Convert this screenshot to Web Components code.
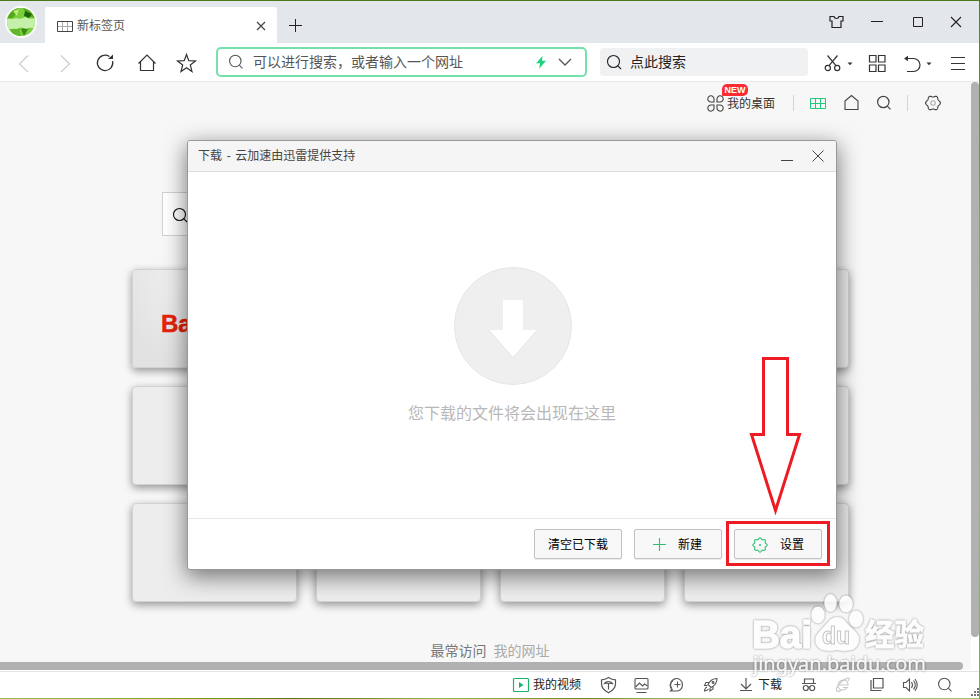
<!DOCTYPE html>
<html lang="zh-CN">
<head>
<meta charset="utf-8">
<title>新标签页</title>
<style>
html,body{margin:0;height:100%;overflow:hidden}
body{font:12px/16px "Liberation Sans","Noto Sans CJK SC",sans-serif;color:#333}
</style>
</head>
<body>
<browser-window></browser-window>
<script>
/* Closed outline whose radius swells once per lobe. */
const lobed=(lobes,radius,swell)=>{
  const pts=[];
  for(let i=0;i<96;i++){
    const a=i*Math.PI/48,r=radius+swell*Math.cos(lobes*a);
    pts.push((12+r*Math.cos(a)).toFixed(2)+' '+(12+r*Math.sin(a)).toFixed(2));
  }
  return `<path d="M${pts.join('L')}z"/>`;
};
const ICONS = {
  back:'<path d="M16 5.5 7.5 14 16 22"/>',
  forward:'<path d="M8 5.5 16.500 14 8 22"/>',
  reload:'<path d="M19.600 11.200a7.700 7.700 0 1 1-3.200-4.700"/><path d="M15 9h5V4.500z" fill="currentColor" stroke="none"/>',
  home:'<path d="M3.500 13.500 12 5l8.500 8.500M5.500 12v8.500h13V12"/>',
  star:'<path d="m12.500 4.500 2.300 6.200 6.700.3-5.200 4 1.700 6.500-5.500-3.700L7 21.500 8.700 15l-5.200-4 6.700-.3z"/>',
  search:'<circle cx="11.300" cy="11" r="5.700"/><path d="m15.500 15.300 3 3"/>',
  bigsearch:'<circle cx="11.500" cy="11.500" r="6"/><path d="m15.700 15.700 3.300 3.300"/>',
  bolt:'<path d="M13.500 6 7 13.200h4l-.8 5.500 6.800-8h-4z" fill="#1fd47c" stroke="none"/>',
  chevron:'<path d="m6 9 6 6 6-6"/>',
  scissors:'<circle cx="6.800" cy="18" r="2.600"/><circle cx="16.200" cy="18" r="2.600"/><path d="M6.500 5.500 15 15.700M16.500 5.500 8 15.700"/>',
  caret:'<path d="M9.500 12.500h5L12 15.300z" fill="currentColor" stroke="none"/>',
  grid4:'<path d="M4.500 5.500h6.500v6.500H4.500zM13.500 5.500H20v6.500h-6.500zM4.500 15h6.500v6.500H4.500zM13.500 15H20v6.500h-6.500z"/>',
  undo:'<path d="M6 8.500h7.500a6.500 6.500 0 0 1 0 13H7"/><path d="m4 8.500 4-2.700v5.400z" fill="currentColor" stroke="none"/>',
  menu:'<path d="M4 7.500h14M4 13.500h14M4 19.500h14"/>',
  table:'<path d="M4.500 7.500h15v10h-15zM9.500 7.500v10M14.500 7.500v10M4.500 12.500h15"/>',
  tabtable:'<path d="M9.500 7.500v10M14.500 7.500v10M4.500 12.500h15" stroke="#aaa"/><path d="M4.500 7.500h15v10h-15z"/>',
  close:'<path d="m8 8 8 8m0-8-8 8"/>',
  wclose:'<path d="m7 7 10 10M17 7 7 17"/>',
  bigclose:'<path d="m6.500 6.500 11 11m0-11-11 11"/>',
  plus:'<path d="M12.500 6v13M6 12.500h13"/>',
  shirt:'<path d="M6 6.500h4q.5 2 2.500 2t2.500-2h4v4.500h-2v6.500H8v-6.500H6z"/>',
  minus:'<path d="M6 11.500h12"/>',
  dminus:'<path d="M6 17.500h12"/>',
  square:'<path d="M7.500 7.500h9v9h-9z"/>',
  clover:'<path d="M11 11H8A3.100 3.100 0 1 1 11 8zM14 11V8a3.100 3.100 0 1 1 3 3zM11 14v3A3.100 3.100 0 1 1 8 14zM14 14h3a3.100 3.100 0 1 1-3 3z"/>',
  house:'<path d="M6 10 12.500 4.500 19 10v8.500H6z"/>',
  hexgear:lobed(6,6.7,.7)+'<circle cx="12" cy="12" r="2.200" stroke="#aaa"/>',
  gear:lobed(8,6.4,.75)+'<circle cx="12" cy="12" r="1" fill="currentColor" stroke="none"/>',
  video:'<rect x="4.500" y="5.500" width="15" height="13" rx="1"/><path d="M10 9v6l4.500-3z" fill="currentColor" stroke="none"/>',
  shield:'<path d="M12.500 4.500q3.500 2.300 7 2.300v4q0 5.500-7 9-7-3.500-7-9v-4q3.500 0 7-2.300z"/><path d="M8.500 10.500q1-2 4-2t4.500 2.500q-2.500-1.500-4.500-.5-2-.8-4 0zM12.500 10v6.500"/>',
  picture:'<rect x="6" y="5.500" width="13" height="10.500" rx="1"/><path d="m6.500 14 4-4 3 3 2-2 3 2M7.500 19.500h10"/>',
  speed:'<path d="M8 15.500a6 6 0 1 1 10.500-3.500c0 3.500-3 6-6 6H6.500l2-2M13.500 8.500v6M10.500 11.500h6"/><path d="M9 7.500Q4 11 8 17.500"/>',
  rocket:'<path d="M19 5.500q-6 0-9 6l3 3q6-3 6-9zM11 9.500H8l-1.500 3h3M15 13.500V16l-3 2v-3M9 14q-2 .5-2.500 4 3-.3 4-2"/><circle cx="15" cy="9.500" r=".9"/>',
  download:'<path d="M12 5v11M7 11l5 5 5-5M6 17.500h12"/>',
  incognito:'<path d="M7.500 10V6h9v4M5 10.500h14"/><circle cx="8.800" cy="15" r="2.500"/><circle cx="15.200" cy="15" r="2.500"/><path d="M11 14h2"/>',
  ie:'<path d="M8 12h9q0-5-4.500-5Q7 7.500 7 13q.5 4 4.500 4 3 0 5-2.500H12M17 8q2.500-3 0-3-5 1-11 9-1.800 4 1 4.500 1.500 0 3-1.200"/>',
  windows:'<path d="M8.500 5.500h9.500v9.500H8.500zM6 7v10.500h10.500"/>',
  volume:'<path d="M5.500 9.500h2.500l3.500-3.500v12L8 14.500H5.500zM13.500 9q2 3 0 6M15.500 7.500q3.500 4.500 0 9M17 6q4.500 6 0 12"/>'
};
const define=(name,html,init)=>customElements.define(name,class extends HTMLElement{
  connectedCallback(){
    if(this.shadowRoot)return;
    const root=this.attachShadow({mode:'open'});
    const t=document.createElement('template');t.innerHTML=html;
    root.append(t.content.cloneNode(true));
    if(init)init(this,root);
  }
});

define('ui-icon',`<style>:host{display:block;flex:none;width:24px;height:24px}svg{display:block}</style><div></div>`,(el,root)=>{
  root.querySelector('div').innerHTML=`<svg width="24" height="24" viewBox="0 0 24 24" fill="none" stroke="currentColor" stroke-width="${el.getAttribute('weight')||1.1}">${ICONS[el.getAttribute('name')]}</svg>`;
  if(el.hasAttribute('gap'))el.style.marginLeft=el.getAttribute('gap')+'px';
});

define('tab-strip',`<style>
:host{display:flex;height:42px;align-items:flex-start;background:#e3e6eb;color:#222}
.avatar{margin:5px 0 0 5px;width:28px;height:28px;border:2px solid #fbfdf8;border-radius:50%;flex:none;overflow:hidden}
.tab{display:flex;align-items:center;box-sizing:border-box;width:232px;height:36px;margin:6px 0 0 8px;background:#fff;border-radius:2px 2px 0 0;padding:2px 0 0 8px;color:#444}
.tab span{width:52px;color:#555}
.ctl{margin-top:9px}.add{margin-top:12px}
</style>
<div class="avatar"><svg width="28" height="28" viewBox="0 0 28 28"><rect width="28" height="28" fill="#7bcf3c"/><path d="M0 0h12L7 9 0 12zM16 0h12v10l-8-2z" fill="#55a81c"/><path d="m18 3 7 3-3 4-5-2z" fill="#1d6509"/><path d="m6 3 6-2-2 7z" fill="#b8ee72"/><path d="m3 20 9-1 2 9H6z" fill="#61b62b"/><path d="m14 21 8-2-5 9z" fill="#398915"/><path d="M0 10q6 2 9 0 5 2 9-1 5 3 10 1v10q-5-1-9 1-5-3-9 0-5-1-10 1z" fill="#c5f0aa"/></svg></div>
<div class="tab"><ui-icon name="tabtable" weight="1"></ui-icon><span>新标签页</span><ui-icon name="close" gap="120" weight="1.200"></ui-icon></div>
<ui-icon class="add" name="plus" gap="6" weight="1"></ui-icon>
<ui-icon class="ctl" name="shirt" gap="517" weight="1.200"></ui-icon>
<ui-icon class="ctl" name="minus" gap="17" weight="1"></ui-icon>
<ui-icon class="ctl" name="square" gap="17" weight="1"></ui-icon>
<ui-icon class="ctl" name="wclose" gap="14"></ui-icon>`);

define('search-field',`<style>
:host{display:flex;align-items:center;box-sizing:border-box;flex:none;font-size:14px;line-height:20px;color:#555}
span{white-space:nowrap;margin-left:var(--label-gap,5px)}
</style><ui-icon name="search"></ui-icon><span><slot></slot></span><slot name="end"></slot>`,(el,root)=>{
  if(el.hasAttribute('big'))root.querySelector('ui-icon').shadowRoot.querySelector('svg').innerHTML=ICONS.bigsearch;
});

define('tool-bar',`<style>
:host{display:flex;height:38px;align-items:center;background:#fff;border-bottom:1px solid #e9e9e9;color:#333}
.off{color:#ccc}
.addr{width:371px;height:30px;margin-left:18px;border:2px solid #75e0ab;border-radius:5px;padding-left:6px}
.addr .end{display:flex;margin-left:66px}
.find{width:208px;height:28px;margin-left:13px;border-radius:4px;background:#eff1f3;padding-left:2px;color:#222;--label-gap:4px}
.caret{width:12px;display:flex;justify-content:center}
</style>
<ui-icon class="off" name="back" gap="12"></ui-icon><ui-icon class="off" name="forward" gap="17"></ui-icon>
<ui-icon name="reload" gap="16" weight="1.300"></ui-icon><ui-icon name="home" gap="18" weight="1.200"></ui-icon><ui-icon name="star" gap="15" weight="1.200"></ui-icon>
<search-field class="addr">可以进行搜索，或者输入一个网址<div class="end" slot="end"><ui-icon name="bolt"></ui-icon><ui-icon name="chevron" weight="1.300"></ui-icon></div></search-field>
<search-field class="find" big>点此搜索</search-field>
<ui-icon name="scissors" gap="13" weight="1.200"></ui-icon><div class="caret" style="margin-left:-1px"><ui-icon name="caret"></ui-icon></div>
<ui-icon name="grid4" gap="9" weight="1.200"></ui-icon><ui-icon name="undo" gap="11" weight="1.200"></ui-icon><div class="caret" style="margin-left:-1px"><ui-icon name="caret"></ui-icon></div>
<ui-icon name="menu" gap="12" weight="1"></ui-icon>`);

define('quick-links',`<style>
:host{display:flex;align-items:center;justify-content:flex-end;height:42px;padding-right:35px;color:#444}
.desk{position:relative;color:#333;padding-top:1px}
.new{position:absolute;left:-5px;top:-11px;width:26px;height:12px;border-radius:5px 5px 5px 1px;background:#fb2d32;color:#fff;font:bold 9px/12px "Liberation Sans",sans-serif;text-align:center}
i{width:1px;height:16px;background:#d5d5d5;margin-left:18px}
</style>
<ui-icon name="clover"></ui-icon><div class="desk">我的桌面<b class="new">NEW</b></div><i></i>
<ui-icon name="table" gap="12" weight="1" style="color:#22c978"></ui-icon><ui-icon name="house" gap="9"></ui-icon><ui-icon name="search" gap="9" weight="1.200"></ui-icon><i style="margin-left:11px"></i><ui-icon name="hexgear" gap="13"></ui-icon>`);

define('site-card',`<style>
:host{display:flex;align-items:center;box-sizing:border-box;width:165px;height:99px;border:1px solid #d2d2d2;border-radius:4px;background:#ededed;box-shadow:0 3px 8px rgba(0,0,0,.4);overflow:hidden;color:#e62208;font:bold 24px/28px "Liberation Sans",sans-serif;padding:11px 0 0 28px}
:host([logo]){background:radial-gradient(circle at 50% 0,#f5f5f5,#e2e2e2 80%);-webkit-text-stroke:.5px #e62208}
</style><slot></slot>`);

define('new-tab-page',`<style>
:host{display:block;height:588px;width:980px;background:#f7f7f7}
.search{width:657px;height:44px;margin:68px 0 0 162px;border:1px solid #d2d2d2;background:#fff;color:#111;padding:1px 0 0 5px}
.cards{display:grid;grid-template-columns:repeat(4,165px);gap:18px 19px;margin:33px 0 0 132px}
footer{display:flex;gap:7px;justify-content:center;margin-top:39px;font-size:14px;line-height:20px;color:#aaa}
footer b{font-weight:400;color:#777}
</style>
<quick-links></quick-links>
<search-field class="search" big></search-field>
<div class="cards"><site-card logo>Ba</site-card>${'<site-card></site-card>'.repeat(11)}</div>
<footer><b>最常访问</b><span>我的网址</span></footer>`);

define('status-bar',`<style>
:host{display:flex;height:27px;align-items:center;background:#fff;border-top:1px solid #e4e4e4;color:#555;box-sizing:border-box;padding-bottom:1px}
span{color:#222;white-space:nowrap}
svg{align-self:flex-end;margin-left:14px}
</style>
<ui-icon name="video" gap="509" style="color:#18b566" weight="1.200"></ui-icon><span>我的视频</span>
<ui-icon name="shield" gap="15" weight="1.200"></ui-icon><ui-icon name="picture" gap="9"></ui-icon><ui-icon name="speed" gap="11"></ui-icon><ui-icon name="rocket" gap="10"></ui-icon>
<ui-icon name="download" gap="12" weight="1.200"></ui-icon><span>下载</span><ui-icon name="incognito" gap="15" weight="1.200"></ui-icon><ui-icon name="ie" gap="10" style="color:#c8c8c8"></ui-icon><ui-icon name="windows" gap="10" weight="1.200"></ui-icon><ui-icon name="volume" gap="9"></ui-icon><ui-icon name="search" gap="11"></ui-icon>
<svg width="9" height="9" fill="#777"><path d="M6 0h2v2H6zM3 3h2v2H3zM6 3h2v2H6zM0 6h2v2H0zM3 6h2v2H3zM6 6h2v2H6z"/></svg>`);

define('dialog-button',`<style>
:host{display:flex;align-items:center;justify-content:center;box-sizing:border-box;width:88px;height:30px;border:1px solid #c2c2c2;border-radius:2px;background:#f8f8f8;color:#000;box-shadow:0 1px 1px rgba(0,0,0,.08);padding-top:1px}
:host([icon]){justify-content:flex-start}
:host([icon=plus]){padding-left:12px}
:host([icon=gear]){padding-left:13px}
ui-icon{color:#2fbf6f;margin-right:8px}
:host([icon=plus]) ui-icon{margin:-1px 7px 0 0}
</style><slot></slot>`,(el,root)=>{
  if(el.hasAttribute('icon')){const i=document.createElement('ui-icon');i.setAttribute('name',el.getAttribute('icon'));i.setAttribute('weight','1.100');root.insertBefore(i,root.querySelector('slot'));}
});

define('download-dialog',`<style>
:host{display:flex;flex-direction:column;box-sizing:border-box;width:650px;height:430px;background:#fff;border:1px solid #999;border-radius:3px;box-shadow:0 6px 22px 1px rgba(0,0,0,.5);color:#333}
header{display:flex;align-items:center;height:30px;flex:none;background:#f5f5f5;border-bottom:1px solid #dcdcdc;border-radius:2px 2px 0 0;padding-left:10px;color:#444}
header span{flex:1;padding-bottom:1px;word-spacing:1.300px}
main{flex:1;display:flex;flex-direction:column;align-items:center;padding-top:95px;font-size:16px;line-height:24px;color:#b8b8b8}
main svg{margin-left:2px}
main p{margin:17px 0 0}
footer{display:flex;gap:12px;justify-content:flex-end;height:51px;box-sizing:border-box;border-top:1px solid #e7e7e7;padding:10px 14px 0 0;flex:none}
</style>
<header><span>下载 - 云加速由迅雷提供支持</span><ui-icon name="dminus" weight="1" style="margin-top:-2px"></ui-icon><ui-icon name="bigclose" gap="7" weight="1" style="margin-right:6px"></ui-icon></header>
<main><svg width="118" height="118"><circle cx="59" cy="59" r="58.500" fill="#efefef" stroke="#e6e6e6"/><path d="M49 33h20v30h14L59 90.500 35 63h14z" fill="#fff"/><path d="M35 63.500 59 90.500l24-27" fill="none" stroke="#e0e0e0" stroke-width=".7"/></svg><p>您下载的文件将会出现在这里</p></main>
<footer><dialog-button>清空已下载</dialog-button><dialog-button icon="plus">新建</dialog-button><dialog-button icon="gear">设置</dialog-button></footer>`);

define('red-callout',`<style>:host{display:block}svg{display:block}</style>
<svg width="104" height="210" fill="none" stroke="#ed1c24" stroke-width="3"><path d="M37.500 2.500h24v76H73.500L49.500 154.500 25.500 78.500H37.500z"/><path d="M1.500 166.500h101v42H1.500z"/></svg>`);

define('paw-watermark',`<style>:host{display:block;opacity:.85}svg{display:block;overflow:visible;filter:drop-shadow(0 0 1px rgba(0,0,0,.5))}text{font-family:"Liberation Sans","Noto Sans CJK SC",sans-serif;font-weight:700}</style>
<svg width="180" height="90" fill="#fff">
<g stroke="#fff" stroke-width="1.400"><text x="2" y="57.500" font-size="38" textLength="60" lengthAdjust="spacingAndGlyphs">Bai</text>
<text x="115" y="55" font-size="30" textLength="59" lengthAdjust="spacingAndGlyphs" stroke-width=".8">经验</text></g>
<ellipse cx="68" cy="25" rx="6.800" ry="8.500"/><ellipse cx="80.500" cy="13" rx="6.300" ry="9"/><ellipse cx="96" cy="14" rx="6.800" ry="8.500"/><ellipse cx="106" cy="29" rx="7" ry="8.500"/>
<path d="M87 27q6 0 9 5l10 10q6 7 1 14-4 7-20 4-15 3-20-4-4-7 1-13l10-11q4-5 9-5z"/>
<text x="72" y="54" font-size="24" textLength="28" lengthAdjust="spacingAndGlyphs" stroke="#bcbcbc" stroke-width="1">du</text>
<text x="3" y="81" font-size="20" textLength="173" lengthAdjust="spacingAndGlyphs" style="font-weight:400;font-family:'Noto Sans',sans-serif" stroke="#fff" stroke-width=".3">jingyan.baidu.com</text>
</svg>`);

define('browser-window',`<style>
:host{display:block;position:relative;box-sizing:border-box;width:980px;height:699px;overflow:hidden;background:#fff;border-top:1px solid #4c7a1b}
.page{height:589px;overflow:hidden}
.layer{position:absolute}
.v{left:971px;top:81px;width:8px;height:555px;border-radius:4px;background:#b1b1b1}
.h{left:0;top:661px;width:963px;height:8px;border-radius:0 4px 4px 0;background:#b1b1b1}
.gutter{left:971px;top:81px;width:9px;height:588px;background:#fff}
.edge{left:979px;top:0;width:1px;height:698px;background:linear-gradient(#55792f,#7fa35b 30%,#96b478 70%,#7cae3f)}
.ground{height:2px;background:linear-gradient(90deg,#96bf4e,#6da019 22%,#4d7a14 30%,#8dbb45 45%,#649322 60%,#b5d68d 75%,#9ac46c)}
</style>
<tab-strip></tab-strip><tool-bar></tool-bar>
<div class="page"><new-tab-page></new-tab-page></div>
<status-bar></status-bar><div class="ground"></div>
<div class="layer gutter"></div><div class="layer v"></div><div class="layer h"></div>
<download-dialog class="layer" style="left:187px;top:139px"></download-dialog>
<red-callout class="layer" style="left:726px;top:355px"></red-callout>
<paw-watermark class="layer" style="left:750px;top:589px"></paw-watermark>
<div class="layer edge"></div>`);
</script>
</body>
</html>
